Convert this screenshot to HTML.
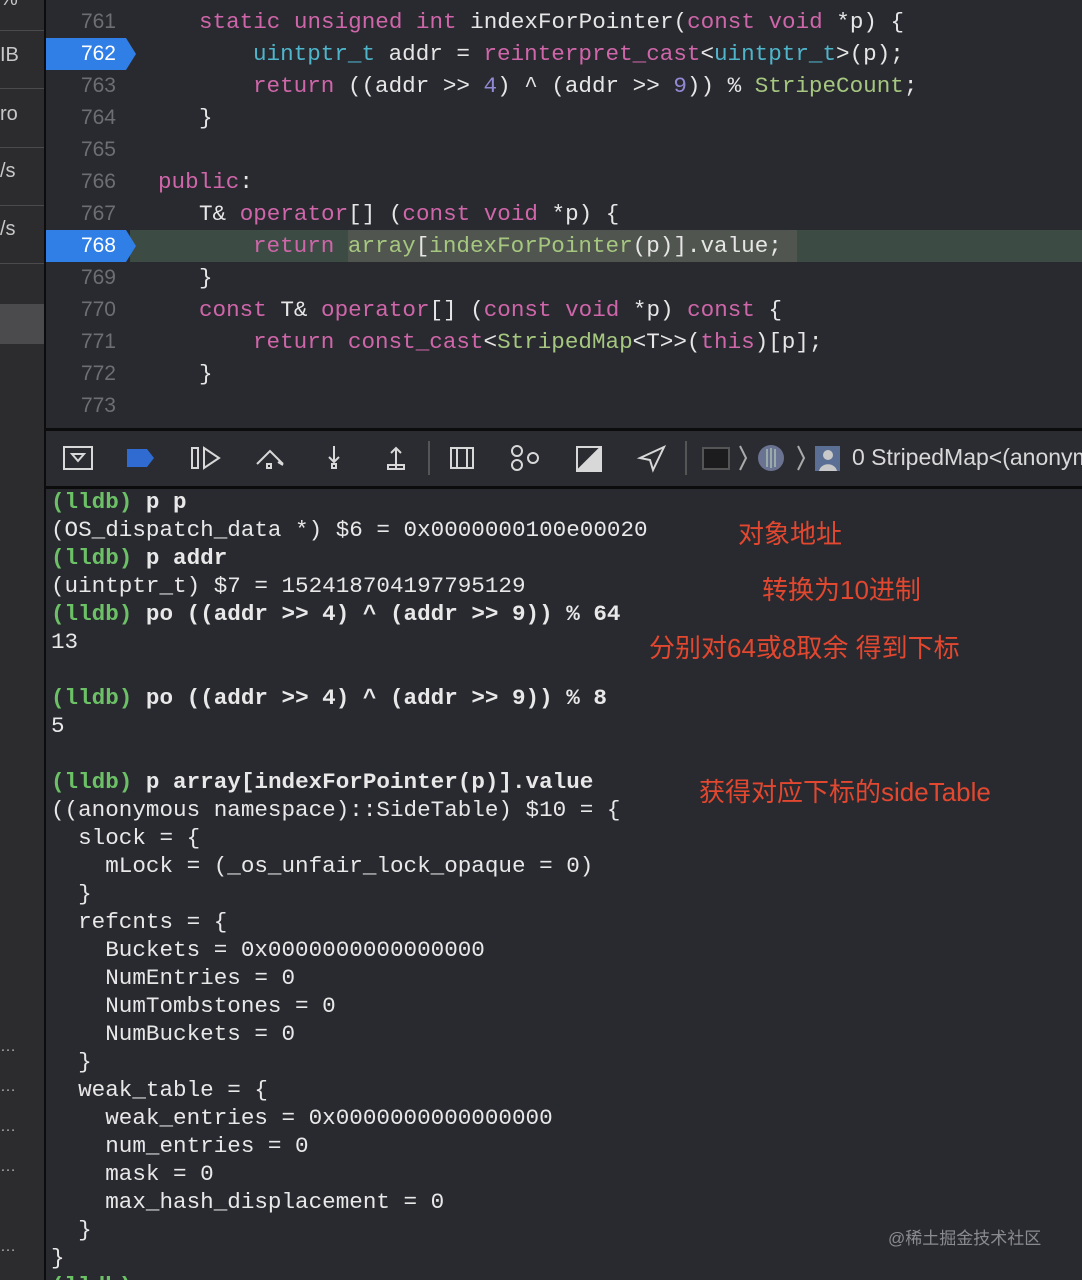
<!DOCTYPE html>
<html><head><meta charset="utf-8"><style>
*{margin:0;padding:0;box-sizing:border-box}
html,body{width:1082px;height:1280px;overflow:hidden}
body{background:#292a30;position:relative;font-family:"Liberation Mono",monospace}
.side{position:absolute;left:0;top:0;width:44px;height:1280px;background:#2c2c2f}
.vsep{position:absolute;left:44px;top:0;width:2px;height:1280px;background:#0c0c0c}
.st{position:absolute;left:0;color:#c8c8c8;font:20px "Liberation Sans",sans-serif}
.sl{position:absolute;left:0;width:44px;height:1px;background:#4a4a4d}
.dots{position:absolute;left:0;color:#aaa;font:16px "Liberation Sans",sans-serif}
.ln{position:absolute;left:46px;width:70px;text-align:right;color:#6d6e73;font:21px "Liberation Sans",sans-serif;height:32px;line-height:32px}
.c{position:absolute;font-size:22.6px;color:#e6e6e6;white-space:pre;height:32px;line-height:32px}
.k{color:#cf66a9}.t{color:#4fb5cb}.n{color:#9189d4}.g{color:#a6c77f}
.mark{position:absolute;left:46px;width:90px;height:32px;background:#2f7fe6;clip-path:polygon(0 0,80px 0,90px 16px,80px 32px,0 32px)}
.con{position:absolute;font-size:22.6px;color:#e8e8e8;white-space:pre;height:28px;line-height:28px;left:51px}
.b{font-weight:bold}.l{color:#6cc066;font-weight:bold}
.ann{position:absolute;color:#e2472f;font:26px "Liberation Sans","Noto Sans CJK SC",sans-serif;white-space:nowrap}
</style></head><body>
<div class="side"></div>
<div style="position:absolute;left:0;top:304px;width:44px;height:40px;background:#4b4b4e"></div>
<div class="st" style="top:-12px">%</div>
<div class="sl" style="top:30px"></div>
<div class="st" style="top:44px">IB</div>
<div class="sl" style="top:88px"></div>
<div class="st" style="top:103px">ro</div>
<div class="sl" style="top:147px"></div>
<div class="st" style="top:160px">/s</div>
<div class="sl" style="top:205px"></div>
<div class="st" style="top:218px">/s</div>
<div class="sl" style="top:263px"></div>
<div class="dots" style="top:1038px">…</div>
<div class="dots" style="top:1078px">…</div>
<div class="dots" style="top:1118px">…</div>
<div class="dots" style="top:1158px">…</div>
<div class="dots" style="top:1238px">…</div>
<div class="vsep"></div>

<div style="position:absolute;left:130px;top:230px;width:952px;height:32px;background:#3d4b45"></div>
<div style="position:absolute;left:348px;top:230px;width:449px;height:32px;background:#50564f"></div>
<div class="mark" style="top:38px"></div>
<div class="mark" style="top:230px"></div>

<div class="ln" style="top:6px">761</div>
<div class="ln" style="top:38px;color:#fff">762</div>
<div class="ln" style="top:70px">763</div>
<div class="ln" style="top:102px">764</div>
<div class="ln" style="top:134px">765</div>
<div class="ln" style="top:166px">766</div>
<div class="ln" style="top:198px">767</div>
<div class="ln" style="top:230px;color:#fff">768</div>
<div class="ln" style="top:262px">769</div>
<div class="ln" style="top:294px">770</div>
<div class="ln" style="top:326px">771</div>
<div class="ln" style="top:358px">772</div>
<div class="ln" style="top:390px">773</div>

<div class="c" style="top:6px;left:199px"><span class="k">static unsigned int</span> indexForPointer(<span class="k">const void</span> *p) {</div>
<div class="c" style="top:38px;left:253px"><span class="t">uintptr_t</span> addr = <span class="k">reinterpret_cast</span>&lt;<span class="t">uintptr_t</span>&gt;(p);</div>
<div class="c" style="top:70px;left:253px"><span class="k">return</span> ((addr &gt;&gt; <span class="n">4</span>) ^ (addr &gt;&gt; <span class="n">9</span>)) % <span class="g">StripeCount</span>;</div>
<div class="c" style="top:102px;left:199px">}</div>
<div class="c" style="top:166px;left:158px"><span class="k">public</span>:</div>
<div class="c" style="top:198px;left:199px">T&amp; <span class="k">operator</span>[] (<span class="k">const void</span> *p) {</div>
<div class="c" style="top:230px;left:253px"><span class="k">return</span> <span class="g">array</span>[<span class="g">indexForPointer</span>(p)].value;</div>
<div class="c" style="top:262px;left:199px">}</div>
<div class="c" style="top:294px;left:199px"><span class="k">const</span> T&amp; <span class="k">operator</span>[] (<span class="k">const void</span> *p) <span class="k">const</span> {</div>
<div class="c" style="top:326px;left:253px"><span class="k">return const_cast</span>&lt;<span class="g">StripedMap</span>&lt;T&gt;&gt;(<span class="k">this</span>)[p];</div>
<div class="c" style="top:358px;left:199px">}</div>

<div style="position:absolute;left:46px;top:428px;width:1036px;height:3px;background:#0c0c0c"></div>
<div style="position:absolute;left:46px;top:431px;width:1036px;height:55px;background:#2b2c31"></div>
<div style="position:absolute;left:46px;top:486px;width:1036px;height:3px;background:#0c0c0c"></div>
<svg style="position:absolute;left:46px;top:431px" width="1036" height="55" viewBox="46 431 1036 55" fill="none" stroke="#d8d8d8" stroke-width="2">
<rect x="64" y="447" width="28" height="22"/><path d="M72 454h12l-6 7z"/>
<path d="M127 449h20l7 9-7 9h-20z" fill="#2f6bd0" stroke="none"/>
<rect x="192" y="448" width="6" height="20"/><path d="M204 448l15 10-15 10z"/>
<path d="M257 464l13-13 13 13M278 462l5 3" /><rect x="267" y="464" width="4" height="4"/>
<path d="M334 446v16M329 457l5 5 5-5"/><rect x="332" y="464" width="4" height="4"/>
<path d="M396 468v-20M391 453l5-5 5 5M388 465h16v4h-16z"/>
<path d="M429 441v34" stroke="#555"/>
<rect x="451" y="448" width="22" height="20"/><path d="M457 448v20M467 448v20"/>
<circle cx="517" cy="451" r="5"/><circle cx="533" cy="458" r="5"/><circle cx="517" cy="465" r="5"/>
<rect x="577" y="447" width="24" height="24" fill="none"/><path d="M579 469l20-20v20z" fill="#d8d8d8"/>
<path d="M664 447l-24 11 10 2 3 10z"/>
<path d="M686 441v34" stroke="#555"/>
<rect x="703" y="448" width="26" height="21" stroke="#555" fill="#1c1c1e"/>
<path d="M740 446l6 12-6 12M798 446l6 12-6 12" stroke="#aaa"/>
<circle cx="771" cy="458" r="13" fill="#6a7391" stroke="none"/><path d="M767 449v18M771 448v20M775 449v18" stroke="#9aa"/>
<rect x="815" y="446" width="25" height="25" fill="#5b6e94" stroke="none"/><circle cx="828" cy="455" r="5" fill="#c9c9c9" stroke="none"/><path d="M819 471c2-9 16-9 18 0z" fill="#c9c9c9" stroke="none"/>
</svg>
<div style="position:absolute;left:852px;top:444px;color:#d8d8d8;font:23px 'Liberation Sans',sans-serif;white-space:nowrap">0 StripedMap&lt;(anonymous</div>

<div style="position:absolute;left:46px;top:489px;width:1036px;height:791px;background:#292a30"></div>
<div style="position:absolute;left:44px;top:489px;width:2px;height:791px;background:#0c0c0c"></div>
<div class="con" style="top:488px"><span class="l">(lldb)</span> <span class="b">p p</span></div>
<div class="con" style="top:516px">(OS_dispatch_data *) $6 = 0x0000000100e00020</div>
<div class="con" style="top:544px"><span class="l">(lldb)</span> <span class="b">p addr</span></div>
<div class="con" style="top:572px">(uintptr_t) $7 = 152418704197795129</div>
<div class="con" style="top:600px"><span class="l">(lldb)</span> <span class="b">po ((addr &gt;&gt; 4) ^ (addr &gt;&gt; 9)) % 64</span></div>
<div class="con" style="top:628px">13</div>
<div class="con" style="top:684px"><span class="l">(lldb)</span> <span class="b">po ((addr &gt;&gt; 4) ^ (addr &gt;&gt; 9)) % 8</span></div>
<div class="con" style="top:712px">5</div>
<div class="con" style="top:768px"><span class="l">(lldb)</span> <span class="b">p array[indexForPointer(p)].value</span></div>
<div class="con" style="top:796px">((anonymous namespace)::SideTable) $10 = {</div>
<div class="con" style="top:824px">  slock = {</div>
<div class="con" style="top:852px">    mLock = (_os_unfair_lock_opaque = 0)</div>
<div class="con" style="top:880px">  }</div>
<div class="con" style="top:908px">  refcnts = {</div>
<div class="con" style="top:936px">    Buckets = 0x0000000000000000</div>
<div class="con" style="top:964px">    NumEntries = 0</div>
<div class="con" style="top:992px">    NumTombstones = 0</div>
<div class="con" style="top:1020px">    NumBuckets = 0</div>
<div class="con" style="top:1048px">  }</div>
<div class="con" style="top:1076px">  weak_table = {</div>
<div class="con" style="top:1104px">    weak_entries = 0x0000000000000000</div>
<div class="con" style="top:1132px">    num_entries = 0</div>
<div class="con" style="top:1160px">    mask = 0</div>
<div class="con" style="top:1188px">    max_hash_displacement = 0</div>
<div class="con" style="top:1216px">  }</div>
<div class="con" style="top:1244px">}</div>
<div class="con" style="top:1272px;height:8px;overflow:hidden"><span class="l">(lldb)</span></div>

<div class="ann" style="left:738px;top:514px">对象地址</div>
<div class="ann" style="left:762px;top:570px">转换为10进制</div>
<div class="ann" style="left:649px;top:628px">分别对64或8取余 得到下标</div>
<div class="ann" style="left:699px;top:772px">获得对应下标的sideTable</div>
<div style="position:absolute;left:888px;top:1224px;color:#8a8b90;font:17px 'Liberation Sans','Noto Sans CJK SC',sans-serif;white-space:nowrap">@稀土掘金技术社区</div>
</body></html>
